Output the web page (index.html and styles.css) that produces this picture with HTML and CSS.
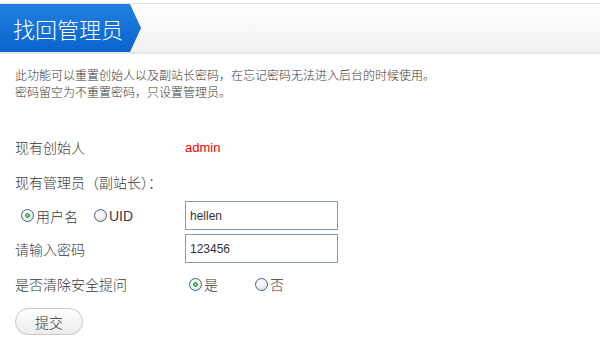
FILE: index.html
```html
<!DOCTYPE html>
<html lang="zh-CN">
<head>
<meta charset="utf-8">
<title>找回管理员</title>
<link rel="stylesheet" href="styles.css">
</head>
<body>
<div class="header">
  <div class="tab">找回管理员</div>
</div>
<p class="intro">此功能可以重置创始人以及副站长密码，在忘记密码无法进入后台的时候使用。<br>密码留空为不重置密码，只设置管理员。</p>
<form class="form">
  <div class="grid">
    <div class="label">现有创始人</div>
    <div class="value"><span class="admin">admin</span></div>

    <div class="label wide">现有管理员（副站长）：</div>

    <div class="label radios">
      <label class="opt"><input type="radio" name="t" checked><span>用户名</span></label>
      <label class="opt uid"><input type="radio" name="t"><span class="latin">UID</span></label>
    </div>
    <div class="value"><input class="text" type="text" value="hellen"></div>

    <div class="label">请输入密码</div>
    <div class="value"><input class="text" type="text" value="123456"></div>

    <div class="label">是否清除安全提问</div>
    <div class="value radios">
      <label class="opt"><input type="radio" name="c" checked><span>是</span></label>
      <label class="opt no"><input type="radio" name="c"><span>否</span></label>
    </div>
  </div>
  <button class="submit" type="button">提交</button>
</form>
</body>
</html>
```
FILE: styles.css
```css
html, body {
  margin: 0;
  padding: 0;
  background: #fff;
}
body {
  font-family: "Noto Sans CJK SC", "Liberation Sans", sans-serif;
  font-weight: 300;
  color: #3a3a3a;
  width: 600px;
}
.header {
  margin-top: 3px;
  height: 48px;
  border-top: 1px solid #e2e2e2;
  border-bottom: 2px solid #e6e6e6;
  background: linear-gradient(#ffffff, #f1f1f1);
  display: flex;
}
.tab {
  width: 141px;
  height: 48px;
  box-sizing: border-box;
  padding-left: 13px;
  line-height: 48px;
  font-size: 22px;
  font-weight: 300;
  color: #fff;
  background: linear-gradient(#1f80e0, #0a63cc);
  clip-path: polygon(0 0, 130px 0, 141px 50%, 130px 100%, 0 100%);
}
.intro {
  margin: 12px 0 0;
  padding-left: 15px;
  font-size: 12px;
  line-height: 17px;
}
.form {
  margin: 30px 0 0;
  padding-left: 15px;
}
.grid {
  display: grid;
  grid-template-columns: 170px 160px;
  grid-template-rows: 34px 35px 33px 33px 38px;
  align-items: center;
}
.label, .value {
  font-size: 14px;
  display: flex;
  align-items: center;
}
.wide {
  grid-column: 1 / 3;
}
.admin {
  font-family: "Liberation Sans", Arial, sans-serif;
  font-weight: 400;
  font-size: 13px;
  color: #f00;
}
.text {
  width: 153px;
  height: 29px;
  box-sizing: border-box;
  border: 1px solid #7f9db9;
  padding: 0 0 0 4px;
  margin: 0;
  font-family: "Liberation Sans", Arial, sans-serif;
  font-size: 12px;
  color: #333;
  outline: none;
}
.radios {
  display: flex;
  align-items: center;
}
.opt {
  display: flex;
  align-items: center;
}
.label.radios .opt:first-child {
  margin-left: 6px;
}
.opt.uid {
  margin-left: 16px;
}
.value.radios .opt:first-child {
  margin-left: 4px;
}
.opt.no {
  margin-left: 37px;
}
.latin {
  font-family: "Liberation Sans", Arial, sans-serif;
  font-weight: 400;
  font-size: 14px;
}
.opt input {
  appearance: none;
  -webkit-appearance: none;
  width: 13px;
  height: 13px;
  margin: 0 2px 0 0;
  border: 1px solid #3d6690;
  border-radius: 50%;
  box-sizing: border-box;
  background: radial-gradient(circle at 40% 35%, #ffffff 0%, #f3f3f3 45%, #d2d2d2 100%);
}
.opt input:checked {
  background:
    radial-gradient(circle, #8fe88f 0px, #2ea52e 2px, transparent 2.7px),
    radial-gradient(circle at 40% 35%, #ffffff 0%, #f3f3f3 45%, #d2d2d2 100%);
}
.submit {
  margin-top: 5px;
  width: 68px;
  height: 27px;
  border: 1px solid #c8c8c8;
  border-radius: 14px;
  background: linear-gradient(#ffffff, #ebebeb);
  font-family: "Noto Sans CJK SC", sans-serif;
  font-weight: 300;
  font-size: 14px;
  color: #333;
  padding: 0;
  box-shadow: 0 1px 1px rgba(0,0,0,0.08);
}
```
